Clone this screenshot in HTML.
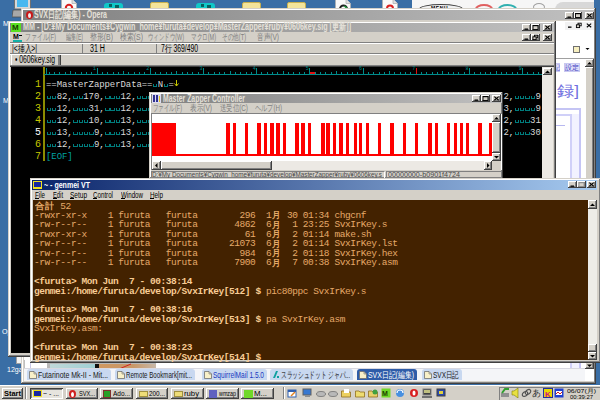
<!DOCTYPE html><html><head><meta charset="utf-8"><style>
html,body{margin:0;padding:0;}
body{width:600px;height:400px;overflow:hidden;position:relative;background:#3a6ea5;font-family:"Liberation Sans",sans-serif;}
div{position:absolute;box-sizing:border-box;}
.t{white-space:pre;font-size:10px;line-height:10px;}
</style></head><body>
<svg style="position:absolute;left:12px;top:0px" width="20" height="18" viewBox="0 0 20 18"><rect x="2.5" y="-1" width="16" height="10" rx="1" fill="#d8d8d8" stroke="#707070"/><rect x="5" y="0" width="11" height="7" fill="#48b8f0"/><path d="M1 10H12L13 17H0Z" fill="#a8a8a8" stroke="#505050" stroke-width="0.8"/></svg>
<svg style="position:absolute;left:61px;top:0px" width="16" height="9" viewBox="0 0 16 9"><path d="M0.5 -1H11L15.5 3.5V9H0.5Z" fill="#fafafa" stroke="#b0b0b0" stroke-width="0.8"/><path d="M11 -1V3.5H15.5" fill="#e0e0e0" stroke="#a0a0a0" stroke-width="0.6"/><circle cx="8" cy="8" r="3.2" fill="none" stroke="#d82020" stroke-width="2"/></svg>
<div style="left:104px;top:3px;width:19px;height:6px;background:#10c8c8;border-radius:3px 3px 0 0"></div>
<div style="left:109px;top:4px;width:3px;height:3px;background:#086060"></div>
<div style="left:115px;top:5px;width:4px;height:3px;background:#086060"></div>
<div style="left:150px;top:2px;width:19px;height:7px;background:#f4e49a;border:1px solid #c8b050;border-radius:2px 2px 0 0"></div>
<div style="left:196px;top:3px;width:19px;height:6px;background:#10c8c8;border-radius:3px 3px 0 0"></div>
<div style="left:201px;top:4px;width:3px;height:3px;background:#086060"></div>
<div style="left:207px;top:5px;width:4px;height:3px;background:#086060"></div>
<div style="left:242px;top:2px;width:19px;height:7px;background:#f4e49a;border:1px solid #c8b050;border-radius:2px 2px 0 0"></div>
<div style="left:287px;top:2px;width:19px;height:7px;background:#f4e49a;border:1px solid #c8b050;border-radius:2px 2px 0 0"></div>
<svg style="position:absolute;left:335px;top:0px" width="16" height="9" viewBox="0 0 16 9"><path d="M0.5 -1H11L15.5 3.5V9H0.5Z" fill="#fafafa" stroke="#b0b0b0" stroke-width="0.8"/><path d="M11 -1V3.5H15.5" fill="#e0e0e0" stroke="#a0a0a0" stroke-width="0.6"/><path d="M5 9A3.5 3.5 0 0 1 12 9" fill="none" stroke="#202020" stroke-width="2"/><path d="M9 6L12 8" stroke="#20a040" stroke-width="1.5"/></svg>
<svg style="position:absolute;left:382px;top:0px" width="16" height="9" viewBox="0 0 16 9"><path d="M0.5 -1H11L15.5 3.5V9H0.5Z" fill="#fafafa" stroke="#b0b0b0" stroke-width="0.8"/><path d="M11 -1V3.5H15.5" fill="#e0e0e0" stroke="#a0a0a0" stroke-width="0.6"/><circle cx="8" cy="8.5" r="3" fill="none" stroke="#d82020" stroke-width="2"/></svg>
<div style="left:412px;top:0px;width:182px;height:9px;background:#f6f6f6"></div>
<div style="left:419px;top:4px;width:44px;height:10px;background:#f0f0f0;border:1px solid #404040;border-radius:50%"></div>
<div class="t" style="left:431px;top:5.5px;font:bold 5px/5px 'Liberation Sans';color:#000;letter-spacing:0.6px">MENU</div>
<div style="left:475px;top:4px;width:18px;height:10px;border:2px solid #e06060;border-radius:50%"></div>
<div style="left:498px;top:4px;width:19px;height:10px;border:2px solid #30b0b0;border-radius:50%"></div>
<div style="left:533px;top:3px;width:12px;height:8px;border:1px solid #a0a0a0;border-radius:50%"></div>
<div style="left:555px;top:2px;width:39px;height:8px;background:#d8d8d8;border-radius:10px 0 0 0"></div>
<div class="t" style="left:3px;top:20px;color:#fff;font-size:7px;line-height:7px">M</div>
<div class="t" style="left:3px;top:97px;color:#fff;font-size:7px;line-height:7px">M</div>
<div class="t" style="left:2px;top:328px;color:#fff;font-size:7px;line-height:7px">Op</div>
<div class="t" style="left:7px;top:366px;color:#fff;font-size:7px;line-height:8px">12ga</div>
<div style="left:16px;top:356px;width:6px;height:8px;background:#f4f4f4;border:1px solid #a0a0a0"></div>
<div style="left:21px;top:8px;width:575px;height:376px;background:#d4d0c8;box-shadow: inset -1px -1px #404040, inset 1px 1px #d4d0c8, inset -2px -2px #808080, inset 2px 2px #ffffff;"></div>
<div style="left:23px;top:10px;width:571px;height:10px;background:linear-gradient(90deg,#808080,#c0c0c0)"></div>
<div style="left:26px;top:11px;width:7px;height:8px;background:#c81818;border-radius:50%"></div>
<div style="left:28px;top:12.5px;width:3px;height:5px;background:#f0e8e8;border-radius:50%"></div>
<div style="left:34px;top:8px;width:76px;height:20px;overflow:hidden"><div id="f1" class="t" style="left:0;top:2px;color:#e4e0d8;font-weight:bold;font-size:10px;line-height:10px;transform:scaleX(0.6988);transform-origin:0 0">SVX日記(編集) - Opera</div></div>
<div style="left:565px;top:12px;width:9px;height:7px;background:#d4d0c8;box-shadow: inset -1px -1px #404040, inset 1px 1px #ffffff, inset -2px -2px #808080;"></div>
<svg style="position:absolute;left:565px;top:12px" width="9" height="7" viewBox="0 0 9 7"><rect x="2.5" y="4.5" width="3.5" height="1.3" fill="#000"/></svg>
<div style="left:574px;top:12px;width:8px;height:7px;background:#d4d0c8;box-shadow: inset -1px -1px #404040, inset 1px 1px #ffffff, inset -2px -2px #808080;"></div>
<svg style="position:absolute;left:574px;top:12px" width="8" height="7" viewBox="0 0 8 7"><rect x="1.5" y="1.5" width="5" height="4" fill="none" stroke="#000" stroke-width="0.9"/><rect x="1.5" y="1" width="5" height="1.2" fill="#000"/></svg>
<div style="left:585px;top:12px;width:9px;height:7px;background:#d4d0c8;box-shadow: inset -1px -1px #404040, inset 1px 1px #ffffff, inset -2px -2px #808080;"></div>
<svg style="position:absolute;left:585px;top:12px" width="9" height="7" viewBox="0 0 9 7"><path d="M2.3 1.6L6.7 5.2M6.7 1.6L2.3 5.2" stroke="#000" stroke-width="1.1"/></svg>
<div style="left:24px;top:21px;width:570px;height:360px;background:#fff"></div>
<div style="left:565px;top:22px;width:29px;height:8px;background:#f2f2f2"></div>
<svg style="position:absolute;left:566px;top:22px" width="8" height="7" viewBox="0 0 8 7"><rect x="2.0" y="4.5" width="3.5" height="1.3" fill="#000"/></svg>
<svg style="position:absolute;left:575px;top:22px" width="8" height="7" viewBox="0 0 8 7"><rect x="3.0" y="1.2" width="3.2" height="2.6" fill="none" stroke="#000" stroke-width="0.9"/><rect x="1.4" y="2.8" width="3.2" height="2.8" fill="#d4d0c8" stroke="#000" stroke-width="0.9"/></svg>
<svg style="position:absolute;left:585px;top:22px" width="8" height="7" viewBox="0 0 8 7"><path d="M1.7999999999999998 1.6L6.2 5.2M6.2 1.6L1.7999999999999998 5.2" stroke="#000" stroke-width="1.1"/></svg>
<div style="left:573px;top:46px;width:7px;height:7px;background:#f8f0c0;border:1px solid #707070"></div>
<svg style="position:absolute;left:585px;top:47px" width="5" height="4" viewBox="0 0 5 4"><path d="M0.5 1L4.5 1L2.5 3Z" fill="#000"/></svg>
<div style="left:24px;top:58px;width:570px;height:1px;background:#a0a0a0"></div>
<div style="left:552px;top:63px;width:8px;height:9px;background:#e0e0f8;border:1px solid #c8c8f0"></div>
<div style="left:554px;top:61px;width:9px;height:20px;overflow:hidden"><div id="f2" class="t" style="left:0;top:2px;color:#4848d0;font-size:7px;line-height:9px;transform:scaleX(0.8571);transform-origin:0 0">記</div></div>
<div style="left:564px;top:63px;width:16px;height:9px;background:#e0e0f8;border:1px solid #c8c8f0"></div>
<div style="left:565px;top:61px;width:17px;height:20px;overflow:hidden"><div id="f3" class="t" style="left:0;top:2px;color:#3838c0;font-size:7px;line-height:9px;transform:scaleX(1.0000);transform-origin:0 0">設定</div></div>
<div style="left:557px;top:81px;width:25px;height:20px;overflow:hidden"><div id="f4" class="t" style="left:0;top:2px;color:#7070e0;font-size:15px;line-height:15px;transform:scaleX(1.1475);transform-origin:0 0">録]</div></div>
<div style="left:556px;top:108px;width:25px;height:260px;border-top:2px solid #c4c4f4;border-right:2px solid #c4c4f4"></div>
<div style="left:556px;top:114px;width:16px;height:254px;border-top:2px solid #d0d0f8;border-right:2px solid #d0d0f8"></div>
<div style="left:572px;top:114px;width:7px;height:254px;background:#f2f2ff"></div>
<div style="left:556px;top:125px;width:9px;height:1px;background:#b8b8f0"></div>
<div style="left:585px;top:59px;width:9px;height:309px;background:#d8d8dc"></div>
<div style="left:585px;top:59px;width:9px;height:8px;background:#d4d0c8;box-shadow: inset -1px -1px #404040, inset 1px 1px #ffffff, inset -2px -2px #808080;"></div>
<svg style="position:absolute;left:585px;top:59px" width="9" height="8" viewBox="0 0 9 8"><path d="M2.0 5.5L7.0 5.5L4.5 3.0Z" fill="#000"/></svg>
<div style="left:585px;top:67px;width:9px;height:288px;background:#d4d0c8;box-shadow: inset -1px -1px #404040, inset 1px 1px #ffffff, inset -2px -2px #808080;"></div>
<div style="left:585px;top:362px;width:9px;height:7px;background:#d4d0c8;box-shadow: inset -1px -1px #404040, inset 1px 1px #ffffff, inset -2px -2px #808080;"></div>
<svg style="position:absolute;left:585px;top:362px" width="9" height="7" viewBox="0 0 9 7"><path d="M2.0 2.5L7.0 2.5L4.5 5.0Z" fill="#000"/></svg>
<div style="left:24px;top:360px;width:1px;height:9px;background:#c0c0c0"></div>
<div style="left:47px;top:363px;width:109px;height:6px;background:#b8b8b8"></div>
<div style="left:50px;top:363.5px;width:45px;height:5px;background:linear-gradient(90deg,#c0d8d8,#a0d0d4)"></div>
<div style="left:95px;top:363.5px;width:4px;height:5px;background:#101010"></div>
<div style="left:99px;top:363.5px;width:57px;height:5px;background:linear-gradient(90deg,#d09860,#c89868 60%,#c8b8a8)"></div>
<svg style="position:absolute;left:118px;top:363px" width="14" height="6" viewBox="0 0 14 6"><path d="M1 6L13 1" stroke="#d02020" stroke-width="1"/></svg>
<div style="left:30px;top:356px;width:1px;height:13px;background:#c8c8e8"></div>
<div style="left:24px;top:368px;width:561px;height:13px;background:#f4f5f8;border-top:1px solid #d8d8e0"></div>
<div style="left:27px;top:369px;width:84px;height:11px;background:#c8d8f0;border-radius:3px 3px 0 0"></div>
<svg style="position:absolute;left:29px;top:370px" width="8" height="9" viewBox="0 0 8 9"><path d="M0.5 1.5H5L7.5 4V8.5H0.5Z" fill="#f8f0c8" stroke="#707070" stroke-width="0.8"/><path d="M5 1.5V4H7.5" fill="none" stroke="#707070" stroke-width="0.6"/></svg>
<div style="left:38px;top:368px;width:73px;height:20px;overflow:hidden"><div id="f5" class="t" style="left:0;top:2px;color:#202020;font-size:9px;line-height:10px;transform:scaleX(0.7733);transform-origin:0 0">Futarinote Mk-II - Mit...</div></div>
<div style="left:115px;top:369px;width:80px;height:11px;background:#c8d8f0;border-radius:3px 3px 0 0"></div>
<svg style="position:absolute;left:117px;top:370px" width="8" height="9" viewBox="0 0 8 9"><path d="M0.5 1.5H5L7.5 4V8.5H0.5Z" fill="#f8f0c8" stroke="#707070" stroke-width="0.8"/><path d="M5 1.5V4H7.5" fill="none" stroke="#707070" stroke-width="0.6"/></svg>
<div style="left:126px;top:368px;width:69px;height:20px;overflow:hidden"><div id="f6" class="t" style="left:0;top:2px;color:#202020;font-size:9px;line-height:10px;transform:scaleX(0.6837);transform-origin:0 0">Remote Bookmark[mit...</div></div>
<div style="left:202px;top:369px;width:65px;height:11px;background:#c8d8f0;border-radius:3px 3px 0 0"></div>
<svg style="position:absolute;left:204px;top:370px" width="8" height="9" viewBox="0 0 8 9"><path d="M0.5 1.5H5L7.5 4V8.5H0.5Z" fill="#f8f0c8" stroke="#707070" stroke-width="0.8"/><path d="M5 1.5V4H7.5" fill="none" stroke="#707070" stroke-width="0.6"/></svg>
<div style="left:213px;top:368px;width:54px;height:20px;overflow:hidden"><div id="f7" class="t" style="left:0;top:2px;color:#1838c0;font-size:9px;line-height:10px;transform:scaleX(0.7282);transform-origin:0 0">SquirrelMail 1.5.0</div></div>
<div style="left:270px;top:369px;width:83px;height:11px;background:#c8d8f0;border-radius:3px 3px 0 0"></div>
<svg style="position:absolute;left:272px;top:370px" width="8" height="9" viewBox="0 0 8 9"><path d="M1 8L4 1L6 1L3 8Z" fill="#10a0a0"/><rect x="5" y="6" width="2" height="2" fill="#10a0a0"/></svg>
<div style="left:281px;top:368px;width:72px;height:20px;overflow:hidden"><div id="f8" class="t" style="left:0;top:2px;color:#202020;font-size:9px;line-height:10px;transform:scaleX(0.6329);transform-origin:0 0">スラッシュドット ジャパ...</div></div>
<div style="left:357px;top:369px;width:60px;height:11px;background:#2e5ca8;border-radius:3px 3px 0 0"></div>
<svg style="position:absolute;left:359px;top:370px" width="8" height="9" viewBox="0 0 8 9"><path d="M0.5 1.5H5L7.5 4V8.5H0.5Z" fill="#f8f0c8" stroke="#707070" stroke-width="0.8"/><path d="M5 1.5V4H7.5" fill="none" stroke="#707070" stroke-width="0.6"/></svg>
<div style="left:368px;top:368px;width:49px;height:20px;overflow:hidden"><div id="f9" class="t" style="left:0;top:2px;color:#fff;font-size:9px;line-height:10px;transform:scaleX(0.7665);transform-origin:0 0">SVX日記(編集)</div></div>
<div style="left:422px;top:369px;width:40px;height:11px;background:#c8d8f0;border-radius:3px 3px 0 0"></div>
<svg style="position:absolute;left:424px;top:370px" width="8" height="9" viewBox="0 0 8 9"><path d="M0.5 1.5H5L7.5 4V8.5H0.5Z" fill="#f8f0c8" stroke="#707070" stroke-width="0.8"/><path d="M5 1.5V4H7.5" fill="none" stroke="#707070" stroke-width="0.6"/></svg>
<div style="left:433px;top:368px;width:29px;height:20px;overflow:hidden"><div id="f10" class="t" style="left:0;top:2px;color:#202020;font-size:9px;line-height:10px;transform:scaleX(0.7219);transform-origin:0 0">SVX日記</div></div>
<div style="left:8px;top:21px;width:548px;height:336px;background:#d4d0c8;box-shadow: inset -1px -1px #404040, inset 1px 1px #d4d0c8, inset -2px -2px #808080, inset 2px 2px #ffffff;"></div>
<div style="left:10px;top:23px;width:544px;height:9px;background:linear-gradient(90deg,#808080,#c0c0c0)"></div>
<div style="left:11px;top:23px;width:10px;height:9px;background:#58e020"></div>
<div class="t" style="left:12px;top:23px;color:#183800;font:bold 8px/9px 'Liberation Sans'">M</div>
<div style="left:23px;top:20px;width:331px;height:20px;overflow:hidden"><div id="f11" class="t" style="left:0;top:2px;color:#e4e0d8;font-weight:bold;font-size:10px;line-height:10px;transform:scaleX(0.7149);transform-origin:0 0">MM - [D:¥My Documents¥Cygwin_home¥furuta¥develop¥MasterZapper¥ruby¥0606key.sig [更新]]</div></div>
<div style="left:522px;top:24px;width:9px;height:7px;background:#d4d0c8;box-shadow: inset -1px -1px #404040, inset 1px 1px #ffffff, inset -2px -2px #808080;"></div>
<svg style="position:absolute;left:522px;top:24px" width="9" height="7" viewBox="0 0 9 7"><rect x="2.5" y="4.5" width="3.5" height="1.3" fill="#000"/></svg>
<div style="left:531px;top:24px;width:9px;height:7px;background:#d4d0c8;box-shadow: inset -1px -1px #404040, inset 1px 1px #ffffff, inset -2px -2px #808080;"></div>
<svg style="position:absolute;left:531px;top:24px" width="9" height="7" viewBox="0 0 9 7"><rect x="2.0" y="1.5" width="5" height="4" fill="none" stroke="#000" stroke-width="0.9"/><rect x="2.0" y="1" width="5" height="1.2" fill="#000"/></svg>
<div style="left:543px;top:24px;width:9px;height:7px;background:#d4d0c8;box-shadow: inset -1px -1px #404040, inset 1px 1px #ffffff, inset -2px -2px #808080;"></div>
<svg style="position:absolute;left:543px;top:24px" width="9" height="7" viewBox="0 0 9 7"><path d="M2.3 1.6L6.7 5.2M6.7 1.6L2.3 5.2" stroke="#000" stroke-width="1.1"/></svg>
<div class="t" style="left:13px;top:33px;color:#000;font:bold 7px/7px 'Liberation Sans'">M</div>
<div style="left:19px;top:35px;width:3px;height:1px;background:#000"></div>
<div style="left:13px;top:39.5px;width:9px;height:2px;background:#10b0a8"></div>
<div style="left:25px;top:31px;width:34px;height:20px;overflow:hidden"><div id="f12" class="t" style="left:0;top:2px;color:#808080;font-size:9px;line-height:9px;transform:scaleX(0.6526);transform-origin:0 0">ファイル(F)</div></div>
<div style="left:66px;top:31px;width:20px;height:20px;overflow:hidden"><div id="f13" class="t" style="left:0;top:2px;color:#808080;font-size:9px;line-height:9px;transform:scaleX(0.5667);transform-origin:0 0">編集(E)</div></div>
<div style="left:90px;top:31px;width:26px;height:20px;overflow:hidden"><div id="f14" class="t" style="left:0;top:2px;color:#808080;font-size:9px;line-height:9px;transform:scaleX(0.7667);transform-origin:0 0">整形(B)</div></div>
<div style="left:120px;top:31px;width:26px;height:20px;overflow:hidden"><div id="f15" class="t" style="left:0;top:2px;color:#808080;font-size:9px;line-height:9px;transform:scaleX(0.7667);transform-origin:0 0">検索(S)</div></div>
<div style="left:148px;top:31px;width:39px;height:20px;overflow:hidden"><div id="f16" class="t" style="left:0;top:2px;color:#808080;font-size:9px;line-height:9px;transform:scaleX(0.6050);transform-origin:0 0">ウィンドウ(W)</div></div>
<div style="left:191px;top:31px;width:28px;height:20px;overflow:hidden"><div id="f17" class="t" style="left:0;top:2px;color:#808080;font-size:9px;line-height:9px;transform:scaleX(0.6173);transform-origin:0 0">マクロ(M)</div></div>
<div style="left:222px;top:31px;width:27px;height:20px;overflow:hidden"><div id="f18" class="t" style="left:0;top:2px;color:#808080;font-size:9px;line-height:9px;transform:scaleX(0.6234);transform-origin:0 0">その他(T)</div></div>
<div style="left:257px;top:31px;width:25px;height:20px;overflow:hidden"><div id="f19" class="t" style="left:0;top:2px;color:#808080;font-size:9px;line-height:9px;transform:scaleX(0.7333);transform-origin:0 0">音声(V)</div></div>
<div style="left:522px;top:34px;width:9px;height:7px;background:#d4d0c8;box-shadow: inset -1px -1px #404040, inset 1px 1px #ffffff, inset -2px -2px #808080;"></div>
<svg style="position:absolute;left:522px;top:34px" width="9" height="7" viewBox="0 0 9 7"><rect x="2.5" y="4.5" width="3.5" height="1.3" fill="#000"/></svg>
<div style="left:531px;top:34px;width:9px;height:7px;background:#d4d0c8;box-shadow: inset -1px -1px #404040, inset 1px 1px #ffffff, inset -2px -2px #808080;"></div>
<svg style="position:absolute;left:531px;top:34px" width="9" height="7" viewBox="0 0 9 7"><rect x="3.5" y="1.2" width="3.2" height="2.6" fill="none" stroke="#000" stroke-width="0.9"/><rect x="1.9" y="2.8" width="3.2" height="2.8" fill="#d4d0c8" stroke="#000" stroke-width="0.9"/></svg>
<div style="left:543px;top:34px;width:9px;height:7px;background:#d4d0c8;box-shadow: inset -1px -1px #404040, inset 1px 1px #ffffff, inset -2px -2px #808080;"></div>
<svg style="position:absolute;left:543px;top:34px" width="9" height="7" viewBox="0 0 9 7"><path d="M2.3 1.6L6.7 5.2M6.7 1.6L2.3 5.2" stroke="#000" stroke-width="1.1"/></svg>
<div style="left:10px;top:42px;width:544px;height:2px;border-top:1px solid #808080;border-bottom:1px solid #fff"></div>
<div style="left:12px;top:42px;width:28px;height:20px;overflow:hidden"><div id="f20" class="t" style="left:0;top:2px;color:#000;font-size:10px;line-height:10px;transform:scaleX(0.6780);transform-origin:0 0">|&lt;挿入&gt;|</div></div>
<div style="left:82px;top:44px;width:1px;height:9px;background:#808080"></div>
<div style="left:90px;top:42px;width:18px;height:20px;overflow:hidden"><div id="f21" class="t" style="left:0;top:2px;color:#000;font-size:10px;line-height:10px;transform:scaleX(0.7101);transform-origin:0 0">31 H</div></div>
<div style="left:156px;top:44px;width:1px;height:9px;background:#808080"></div>
<div style="left:161px;top:42px;width:40px;height:20px;overflow:hidden"><div id="f22" class="t" style="left:0;top:2px;color:#000;font-size:10px;line-height:10px;transform:scaleX(0.6789);transform-origin:0 0">7行 369/490</div></div>
<div style="left:10px;top:53px;width:544px;height:2px;border-top:1px solid #808080;border-bottom:1px solid #fff"></div>
<div style="left:11px;top:55px;width:50px;height:11px;background:#d4d0c8;border-left:1px solid #fff;border-right:1px solid #404040;box-shadow:inset -2px 0 #808080"></div>
<div style="left:15px;top:53px;width:43px;height:20px;overflow:hidden"><div id="f23" class="t" style="left:0;top:2px;color:#000;font-size:10px;line-height:10px;transform:scaleX(0.6790);transform-origin:0 0">• 0606key.sig</div></div>
<div style="left:10px;top:65px;width:544px;height:2px;border-top:1px solid #808080;border-bottom:1px solid #404040"></div>
<div style="left:11px;top:67px;width:531px;height:286px;background:#000"></div>
<div style="left:542px;top:67px;width:11px;height:286px;background:#ece9e4"></div>
<div style="left:543px;top:68px;width:9px;height:7px;background:#d4d0c8;box-shadow: inset -1px -1px #404040, inset 1px 1px #ffffff, inset -2px -2px #808080;"></div>
<svg style="position:absolute;left:543px;top:68px" width="9" height="7" viewBox="0 0 9 7"><path d="M2.0 5.0L7.0 5.0L4.5 2.5Z" fill="#000"/></svg>
<div style="left:43px;top:67px;width:1.5px;height:94px;background:#8c8c00"></div>
<div style="left:44px;top:74px;width:498px;height:1px;background:#008b8b"></div><div style="left:48.66px;top:72px;width:1px;height:2px;background:#008b8b"></div><div style="left:53.98px;top:72px;width:1px;height:2px;background:#008b8b"></div><div style="left:59.30px;top:72px;width:1px;height:2px;background:#008b8b"></div><div style="left:64.62px;top:72px;width:1px;height:2px;background:#008b8b"></div><div style="left:69.94px;top:71px;width:1px;height:3px;background:#008b8b"></div><div style="left:75.26px;top:72px;width:1px;height:2px;background:#008b8b"></div><div style="left:80.58px;top:72px;width:1px;height:2px;background:#008b8b"></div><div style="left:85.90px;top:72px;width:1px;height:2px;background:#008b8b"></div><div style="left:91.22px;top:72px;width:1px;height:2px;background:#008b8b"></div><div style="left:96.54px;top:68px;width:1px;height:6px;background:#008b8b"></div><div class="t" style="left:93.04px;top:67px;color:#008b8b;font:5px/5px 'Liberation Mono'">1</div><div style="left:101.86px;top:72px;width:1px;height:2px;background:#008b8b"></div><div style="left:107.18px;top:72px;width:1px;height:2px;background:#008b8b"></div><div style="left:112.50px;top:72px;width:1px;height:2px;background:#008b8b"></div><div style="left:117.82px;top:72px;width:1px;height:2px;background:#008b8b"></div><div style="left:123.14px;top:71px;width:1px;height:3px;background:#008b8b"></div><div style="left:128.46px;top:72px;width:1px;height:2px;background:#008b8b"></div><div style="left:133.78px;top:72px;width:1px;height:2px;background:#008b8b"></div><div style="left:139.10px;top:72px;width:1px;height:2px;background:#008b8b"></div><div style="left:144.42px;top:72px;width:1px;height:2px;background:#008b8b"></div><div style="left:149.74px;top:68px;width:1px;height:6px;background:#008b8b"></div><div class="t" style="left:146.24px;top:67px;color:#008b8b;font:5px/5px 'Liberation Mono'">2</div><div style="left:155.06px;top:72px;width:1px;height:2px;background:#008b8b"></div><div style="left:160.38px;top:72px;width:1px;height:2px;background:#008b8b"></div><div style="left:165.70px;top:72px;width:1px;height:2px;background:#008b8b"></div><div style="left:171.02px;top:72px;width:1px;height:2px;background:#008b8b"></div><div style="left:176.34px;top:71px;width:1px;height:3px;background:#008b8b"></div><div style="left:181.66px;top:72px;width:1px;height:2px;background:#008b8b"></div><div style="left:186.98px;top:72px;width:1px;height:2px;background:#008b8b"></div><div style="left:192.30px;top:72px;width:1px;height:2px;background:#008b8b"></div><div style="left:197.62px;top:72px;width:1px;height:2px;background:#008b8b"></div><div style="left:202.94px;top:68px;width:1px;height:6px;background:#008b8b"></div><div class="t" style="left:199.44px;top:67px;color:#008b8b;font:5px/5px 'Liberation Mono'">3</div><div style="left:208.26px;top:72px;width:1px;height:2px;background:#008b8b"></div><div style="left:213.58px;top:72px;width:1px;height:2px;background:#008b8b"></div><div style="left:218.90px;top:72px;width:1px;height:2px;background:#008b8b"></div><div style="left:224.22px;top:72px;width:1px;height:2px;background:#008b8b"></div><div style="left:229.54px;top:71px;width:1px;height:3px;background:#008b8b"></div><div style="left:234.86px;top:72px;width:1px;height:2px;background:#008b8b"></div><div style="left:240.18px;top:72px;width:1px;height:2px;background:#008b8b"></div><div style="left:245.50px;top:72px;width:1px;height:2px;background:#008b8b"></div><div style="left:250.82px;top:72px;width:1px;height:2px;background:#008b8b"></div><div style="left:256.14px;top:68px;width:1px;height:6px;background:#008b8b"></div><div class="t" style="left:252.64px;top:67px;color:#008b8b;font:5px/5px 'Liberation Mono'">4</div><div style="left:261.46px;top:72px;width:1px;height:2px;background:#008b8b"></div><div style="left:266.78px;top:72px;width:1px;height:2px;background:#008b8b"></div><div style="left:272.10px;top:72px;width:1px;height:2px;background:#008b8b"></div><div style="left:277.42px;top:72px;width:1px;height:2px;background:#008b8b"></div><div style="left:282.74px;top:71px;width:1px;height:3px;background:#008b8b"></div><div style="left:288.06px;top:72px;width:1px;height:2px;background:#008b8b"></div><div style="left:293.38px;top:72px;width:1px;height:2px;background:#008b8b"></div><div style="left:298.70px;top:72px;width:1px;height:2px;background:#008b8b"></div><div style="left:304.02px;top:72px;width:1px;height:2px;background:#008b8b"></div><div style="left:309.34px;top:68px;width:1px;height:6px;background:#008b8b"></div><div class="t" style="left:305.84px;top:67px;color:#008b8b;font:5px/5px 'Liberation Mono'">5</div><div style="left:314.66px;top:72px;width:1px;height:2px;background:#008b8b"></div><div style="left:319.98px;top:72px;width:1px;height:2px;background:#008b8b"></div><div style="left:325.30px;top:72px;width:1px;height:2px;background:#008b8b"></div><div style="left:330.62px;top:72px;width:1px;height:2px;background:#008b8b"></div><div style="left:335.94px;top:71px;width:1px;height:3px;background:#008b8b"></div><div style="left:341.26px;top:72px;width:1px;height:2px;background:#008b8b"></div><div style="left:346.58px;top:72px;width:1px;height:2px;background:#008b8b"></div><div style="left:351.90px;top:72px;width:1px;height:2px;background:#008b8b"></div><div style="left:357.22px;top:72px;width:1px;height:2px;background:#008b8b"></div><div style="left:362.54px;top:68px;width:1px;height:6px;background:#008b8b"></div><div class="t" style="left:359.04px;top:67px;color:#008b8b;font:5px/5px 'Liberation Mono'">6</div><div style="left:367.86px;top:72px;width:1px;height:2px;background:#008b8b"></div><div style="left:373.18px;top:72px;width:1px;height:2px;background:#008b8b"></div><div style="left:378.50px;top:72px;width:1px;height:2px;background:#008b8b"></div><div style="left:383.82px;top:72px;width:1px;height:2px;background:#008b8b"></div><div style="left:389.14px;top:71px;width:1px;height:3px;background:#008b8b"></div><div style="left:394.46px;top:72px;width:1px;height:2px;background:#008b8b"></div><div style="left:399.78px;top:72px;width:1px;height:2px;background:#008b8b"></div><div style="left:405.10px;top:72px;width:1px;height:2px;background:#008b8b"></div><div style="left:410.42px;top:72px;width:1px;height:2px;background:#008b8b"></div><div style="left:415.74px;top:68px;width:1px;height:6px;background:#e01010"></div><div class="t" style="left:412.24px;top:67px;color:#008b8b;font:5px/5px 'Liberation Mono'">7</div><div style="left:421.06px;top:72px;width:1px;height:2px;background:#008b8b"></div><div style="left:426.38px;top:72px;width:1px;height:2px;background:#008b8b"></div><div style="left:431.70px;top:72px;width:1px;height:2px;background:#008b8b"></div><div style="left:437.02px;top:72px;width:1px;height:2px;background:#008b8b"></div><div style="left:442.34px;top:71px;width:1px;height:3px;background:#008b8b"></div><div style="left:447.66px;top:72px;width:1px;height:2px;background:#008b8b"></div><div style="left:452.98px;top:72px;width:1px;height:2px;background:#008b8b"></div><div style="left:458.30px;top:72px;width:1px;height:2px;background:#008b8b"></div><div style="left:463.62px;top:72px;width:1px;height:2px;background:#008b8b"></div><div style="left:468.94px;top:68px;width:1px;height:6px;background:#008b8b"></div><div class="t" style="left:465.44px;top:67px;color:#008b8b;font:5px/5px 'Liberation Mono'">8</div><div style="left:474.26px;top:72px;width:1px;height:2px;background:#008b8b"></div><div style="left:479.58px;top:72px;width:1px;height:2px;background:#008b8b"></div><div style="left:484.90px;top:72px;width:1px;height:2px;background:#008b8b"></div><div style="left:490.22px;top:72px;width:1px;height:2px;background:#008b8b"></div><div style="left:495.54px;top:71px;width:1px;height:3px;background:#008b8b"></div><div style="left:500.86px;top:72px;width:1px;height:2px;background:#008b8b"></div><div style="left:506.18px;top:72px;width:1px;height:2px;background:#008b8b"></div><div style="left:511.50px;top:72px;width:1px;height:2px;background:#008b8b"></div><div style="left:516.82px;top:72px;width:1px;height:2px;background:#008b8b"></div><div style="left:522.14px;top:68px;width:1px;height:6px;background:#008b8b"></div><div class="t" style="left:518.64px;top:67px;color:#008b8b;font:5px/5px 'Liberation Mono'">9</div><div style="left:527.46px;top:72px;width:1px;height:2px;background:#008b8b"></div><div style="left:532.78px;top:72px;width:1px;height:2px;background:#008b8b"></div><div style="left:538.10px;top:72px;width:1px;height:2px;background:#008b8b"></div><div style="left:45.5px;top:68px;width:1px;height:6px;background:#008b8b"></div>
<div style="left:310px;top:71.5px;width:5px;height:2.5px;background:#e01010"></div>
<div class="t" style="left:31px;top:78.5px;color:#c8c800;font:10px/12px 'Liberation Mono',monospace;width:10px;text-align:right">1</div>
<div style="left:153.00px;top:83.5px;width:4.4px;height:3px;border:1px solid #007c7c;border-top:none"></div><div style="left:163.64px;top:83.5px;width:4.4px;height:3px;border:1px solid #007c7c;border-top:none"></div><div class="t" style="left:46.00px;top:78.5px;color:#d8d8d8;font:9px/12px 'Liberation Mono',monospace;letter-spacing:-0.08px">==MasterZapperData== N =</div>
<svg style="position:absolute;left:174px;top:80px" width="5" height="7" viewBox="0 0 5 7"><path d="M2.5 0V6M0.5 3.5L2.5 6L4.5 3.5" stroke="#c8c800" stroke-width="1" fill="none"/></svg>
<div class="t" style="left:31px;top:90.5px;color:#c8c800;font:10px/12px 'Liberation Mono',monospace;width:10px;text-align:right">2</div>
<div style="left:46.60px;top:95.5px;width:4.4px;height:3px;border:1px solid #007c7c;border-top:none"></div><div style="left:51.92px;top:95.5px;width:4.4px;height:3px;border:1px solid #007c7c;border-top:none"></div><div style="left:73.20px;top:95.5px;width:4.4px;height:3px;border:1px solid #007c7c;border-top:none"></div><div style="left:78.52px;top:95.5px;width:4.4px;height:3px;border:1px solid #007c7c;border-top:none"></div><div style="left:105.12px;top:95.5px;width:4.4px;height:3px;border:1px solid #007c7c;border-top:none"></div><div style="left:110.44px;top:95.5px;width:4.4px;height:3px;border:1px solid #007c7c;border-top:none"></div><div style="left:115.76px;top:95.5px;width:4.4px;height:3px;border:1px solid #007c7c;border-top:none"></div><div style="left:137.04px;top:95.5px;width:4.4px;height:3px;border:1px solid #007c7c;border-top:none"></div><div style="left:142.36px;top:95.5px;width:4.4px;height:3px;border:1px solid #007c7c;border-top:none"></div><div style="left:147.68px;top:95.5px;width:4.4px;height:3px;border:1px solid #007c7c;border-top:none"></div><div class="t" style="left:46.00px;top:90.5px;color:#d8d8d8;font:9px/12px 'Liberation Mono',monospace;letter-spacing:-0.08px">  82,  170,   12,   </div><div style="left:514.76px;top:95.5px;width:4.4px;height:3px;border:1px solid #007c7c;border-top:none"></div><div style="left:520.08px;top:95.5px;width:4.4px;height:3px;border:1px solid #007c7c;border-top:none"></div><div style="left:525.40px;top:95.5px;width:4.4px;height:3px;border:1px solid #007c7c;border-top:none"></div><div style="left:530.72px;top:95.5px;width:4.4px;height:3px;border:1px solid #007c7c;border-top:none"></div><div class="t" style="left:503.52px;top:90.5px;color:#d8d8d8;font:9px/12px 'Liberation Mono',monospace;letter-spacing:-0.08px">2,    9</div>
<div class="t" style="left:31px;top:102.5px;color:#c8c800;font:10px/12px 'Liberation Mono',monospace;width:10px;text-align:right">3</div>
<div style="left:46.60px;top:107.5px;width:4.4px;height:3px;border:1px solid #007c7c;border-top:none"></div><div style="left:51.92px;top:107.5px;width:4.4px;height:3px;border:1px solid #007c7c;border-top:none"></div><div style="left:73.20px;top:107.5px;width:4.4px;height:3px;border:1px solid #007c7c;border-top:none"></div><div style="left:78.52px;top:107.5px;width:4.4px;height:3px;border:1px solid #007c7c;border-top:none"></div><div style="left:83.84px;top:107.5px;width:4.4px;height:3px;border:1px solid #007c7c;border-top:none"></div><div style="left:105.12px;top:107.5px;width:4.4px;height:3px;border:1px solid #007c7c;border-top:none"></div><div style="left:110.44px;top:107.5px;width:4.4px;height:3px;border:1px solid #007c7c;border-top:none"></div><div style="left:115.76px;top:107.5px;width:4.4px;height:3px;border:1px solid #007c7c;border-top:none"></div><div style="left:137.04px;top:107.5px;width:4.4px;height:3px;border:1px solid #007c7c;border-top:none"></div><div style="left:142.36px;top:107.5px;width:4.4px;height:3px;border:1px solid #007c7c;border-top:none"></div><div style="left:147.68px;top:107.5px;width:4.4px;height:3px;border:1px solid #007c7c;border-top:none"></div><div class="t" style="left:46.00px;top:102.5px;color:#d8d8d8;font:9px/12px 'Liberation Mono',monospace;letter-spacing:-0.08px">  12,   31,   12,   </div><div style="left:514.76px;top:107.5px;width:4.4px;height:3px;border:1px solid #007c7c;border-top:none"></div><div style="left:520.08px;top:107.5px;width:4.4px;height:3px;border:1px solid #007c7c;border-top:none"></div><div style="left:525.40px;top:107.5px;width:4.4px;height:3px;border:1px solid #007c7c;border-top:none"></div><div style="left:530.72px;top:107.5px;width:4.4px;height:3px;border:1px solid #007c7c;border-top:none"></div><div class="t" style="left:503.52px;top:102.5px;color:#d8d8d8;font:9px/12px 'Liberation Mono',monospace;letter-spacing:-0.08px">3,    9</div>
<div class="t" style="left:31px;top:114.5px;color:#c8c800;font:10px/12px 'Liberation Mono',monospace;width:10px;text-align:right">4</div>
<div style="left:46.60px;top:119.5px;width:4.4px;height:3px;border:1px solid #007c7c;border-top:none"></div><div style="left:51.92px;top:119.5px;width:4.4px;height:3px;border:1px solid #007c7c;border-top:none"></div><div style="left:73.20px;top:119.5px;width:4.4px;height:3px;border:1px solid #007c7c;border-top:none"></div><div style="left:78.52px;top:119.5px;width:4.4px;height:3px;border:1px solid #007c7c;border-top:none"></div><div style="left:83.84px;top:119.5px;width:4.4px;height:3px;border:1px solid #007c7c;border-top:none"></div><div style="left:105.12px;top:119.5px;width:4.4px;height:3px;border:1px solid #007c7c;border-top:none"></div><div style="left:110.44px;top:119.5px;width:4.4px;height:3px;border:1px solid #007c7c;border-top:none"></div><div style="left:115.76px;top:119.5px;width:4.4px;height:3px;border:1px solid #007c7c;border-top:none"></div><div style="left:137.04px;top:119.5px;width:4.4px;height:3px;border:1px solid #007c7c;border-top:none"></div><div style="left:142.36px;top:119.5px;width:4.4px;height:3px;border:1px solid #007c7c;border-top:none"></div><div style="left:147.68px;top:119.5px;width:4.4px;height:3px;border:1px solid #007c7c;border-top:none"></div><div class="t" style="left:46.00px;top:114.5px;color:#d8d8d8;font:9px/12px 'Liberation Mono',monospace;letter-spacing:-0.08px">  12,   10,   13,   </div><div style="left:514.76px;top:119.5px;width:4.4px;height:3px;border:1px solid #007c7c;border-top:none"></div><div style="left:520.08px;top:119.5px;width:4.4px;height:3px;border:1px solid #007c7c;border-top:none"></div><div style="left:525.40px;top:119.5px;width:4.4px;height:3px;border:1px solid #007c7c;border-top:none"></div><div class="t" style="left:503.52px;top:114.5px;color:#d8d8d8;font:9px/12px 'Liberation Mono',monospace;letter-spacing:-0.08px">2,   31</div>
<div class="t" style="left:31px;top:126.5px;color:#ffffff;font:10px/12px 'Liberation Mono',monospace;width:10px;text-align:right">5</div>
<div style="left:46.60px;top:131.5px;width:4.4px;height:3px;border:1px solid #007c7c;border-top:none"></div><div style="left:51.92px;top:131.5px;width:4.4px;height:3px;border:1px solid #007c7c;border-top:none"></div><div style="left:73.20px;top:131.5px;width:4.4px;height:3px;border:1px solid #007c7c;border-top:none"></div><div style="left:78.52px;top:131.5px;width:4.4px;height:3px;border:1px solid #007c7c;border-top:none"></div><div style="left:83.84px;top:131.5px;width:4.4px;height:3px;border:1px solid #007c7c;border-top:none"></div><div style="left:89.16px;top:131.5px;width:4.4px;height:3px;border:1px solid #007c7c;border-top:none"></div><div style="left:105.12px;top:131.5px;width:4.4px;height:3px;border:1px solid #007c7c;border-top:none"></div><div style="left:110.44px;top:131.5px;width:4.4px;height:3px;border:1px solid #007c7c;border-top:none"></div><div style="left:115.76px;top:131.5px;width:4.4px;height:3px;border:1px solid #007c7c;border-top:none"></div><div style="left:137.04px;top:131.5px;width:4.4px;height:3px;border:1px solid #007c7c;border-top:none"></div><div style="left:142.36px;top:131.5px;width:4.4px;height:3px;border:1px solid #007c7c;border-top:none"></div><div style="left:147.68px;top:131.5px;width:4.4px;height:3px;border:1px solid #007c7c;border-top:none"></div><div class="t" style="left:46.00px;top:126.5px;color:#d8d8d8;font:9px/12px 'Liberation Mono',monospace;letter-spacing:-0.08px">  13,    9,   13,   </div><div style="left:514.76px;top:131.5px;width:4.4px;height:3px;border:1px solid #007c7c;border-top:none"></div><div style="left:520.08px;top:131.5px;width:4.4px;height:3px;border:1px solid #007c7c;border-top:none"></div><div style="left:525.40px;top:131.5px;width:4.4px;height:3px;border:1px solid #007c7c;border-top:none"></div><div class="t" style="left:503.52px;top:126.5px;color:#d8d8d8;font:9px/12px 'Liberation Mono',monospace;letter-spacing:-0.08px">2,   30</div>
<div class="t" style="left:31px;top:138.5px;color:#c8c800;font:10px/12px 'Liberation Mono',monospace;width:10px;text-align:right">6</div>
<div style="left:46.60px;top:143.5px;width:4.4px;height:3px;border:1px solid #007c7c;border-top:none"></div><div style="left:51.92px;top:143.5px;width:4.4px;height:3px;border:1px solid #007c7c;border-top:none"></div><div style="left:73.20px;top:143.5px;width:4.4px;height:3px;border:1px solid #007c7c;border-top:none"></div><div style="left:78.52px;top:143.5px;width:4.4px;height:3px;border:1px solid #007c7c;border-top:none"></div><div style="left:83.84px;top:143.5px;width:4.4px;height:3px;border:1px solid #007c7c;border-top:none"></div><div style="left:89.16px;top:143.5px;width:4.4px;height:3px;border:1px solid #007c7c;border-top:none"></div><div style="left:105.12px;top:143.5px;width:4.4px;height:3px;border:1px solid #007c7c;border-top:none"></div><div style="left:110.44px;top:143.5px;width:4.4px;height:3px;border:1px solid #007c7c;border-top:none"></div><div style="left:115.76px;top:143.5px;width:4.4px;height:3px;border:1px solid #007c7c;border-top:none"></div><div style="left:137.04px;top:143.5px;width:4.4px;height:3px;border:1px solid #007c7c;border-top:none"></div><div style="left:142.36px;top:143.5px;width:4.4px;height:3px;border:1px solid #007c7c;border-top:none"></div><div style="left:147.68px;top:143.5px;width:4.4px;height:3px;border:1px solid #007c7c;border-top:none"></div><div class="t" style="left:46.00px;top:138.5px;color:#d8d8d8;font:9px/12px 'Liberation Mono',monospace;letter-spacing:-0.08px">  12,    9,   13,   </div>
<div class="t" style="left:46px;top:150.5px;color:#00a0a0;font:9px/12px 'Liberation Mono',monospace;letter-spacing:-0.08px">[EOF]</div>
<div class="t" style="left:31px;top:150.5px;color:#c8c800;font:10px/12px 'Liberation Mono',monospace;width:10px;text-align:right">7</div>
<div style="left:149px;top:92px;width:354px;height:87px;background:#d4d0c8;box-shadow: inset -1px -1px #404040, inset 1px 1px #d4d0c8, inset -2px -2px #808080, inset 2px 2px #ffffff;"></div>
<div style="left:151px;top:94px;width:351px;height:9px;background:linear-gradient(90deg,#808080,#c0c0c0)"></div>
<div style="left:152px;top:94px;width:9px;height:9px;background:#dcdcf0"></div>
<div style="left:153px;top:95px;width:2px;height:7px;background:#303090"></div>
<div style="left:156px;top:95px;width:2px;height:7px;background:#303090"></div>
<div style="left:159px;top:96px;width:1px;height:6px;background:#e0c020"></div>
<div style="left:163px;top:92px;width:85px;height:20px;overflow:hidden"><div id="f24" class="t" style="left:0;top:2px;color:#e4e0d8;font-weight:bold;font-size:10px;line-height:9px;transform:scaleX(0.6895);transform-origin:0 0">Master Zapper Controller</div></div>
<div style="left:472px;top:95px;width:9px;height:7px;background:#d4d0c8;box-shadow: inset -1px -1px #404040, inset 1px 1px #ffffff, inset -2px -2px #808080;"></div>
<svg style="position:absolute;left:472px;top:95px" width="9" height="7" viewBox="0 0 9 7"><rect x="2.5" y="4.5" width="3.5" height="1.3" fill="#000"/></svg>
<div style="left:481px;top:95px;width:9px;height:7px;background:#d4d0c8;box-shadow: inset -1px -1px #404040, inset 1px 1px #ffffff, inset -2px -2px #808080;"></div>
<svg style="position:absolute;left:481px;top:95px" width="9" height="7" viewBox="0 0 9 7"><rect x="2.0" y="1.5" width="5" height="4" fill="none" stroke="#000" stroke-width="0.9"/><rect x="2.0" y="1" width="5" height="1.2" fill="#000"/></svg>
<div style="left:492px;top:95px;width:9px;height:7px;background:#d4d0c8;box-shadow: inset -1px -1px #404040, inset 1px 1px #ffffff, inset -2px -2px #808080;"></div>
<svg style="position:absolute;left:492px;top:95px" width="9" height="7" viewBox="0 0 9 7"><path d="M2.3 1.6L6.7 5.2M6.7 1.6L2.3 5.2" stroke="#000" stroke-width="1.1"/></svg>
<div style="left:153px;top:101px;width:32px;height:20px;overflow:hidden"><div id="f25" class="t" style="left:0;top:2px;color:#808080;font-size:9px;line-height:10px;transform:scaleX(0.6105);transform-origin:0 0">ファイル(F)</div></div>
<div style="left:190px;top:101px;width:25px;height:20px;overflow:hidden"><div id="f26" class="t" style="left:0;top:2px;color:#808080;font-size:9px;line-height:10px;transform:scaleX(0.7333);transform-origin:0 0">表示(V)</div></div>
<div style="left:220px;top:101px;width:31px;height:20px;overflow:hidden"><div id="f27" class="t" style="left:0;top:2px;color:#808080;font-size:9px;line-height:10px;transform:scaleX(0.7089);transform-origin:0 0">送受信(C)</div></div>
<div style="left:255px;top:101px;width:30px;height:20px;overflow:hidden"><div id="f28" class="t" style="left:0;top:2px;color:#808080;font-size:9px;line-height:10px;transform:scaleX(0.6835);transform-origin:0 0">ヘルプ(H)</div></div>
<div style="left:151px;top:113px;width:351px;height:57px;background:#fff;border-top:1px solid #808080;border-left:1px solid #808080"></div>
<div style="left:152.0px;top:122.5px;width:24.0px;height:33px;background:#ff0000"></div><div style="left:226.0px;top:122.5px;width:4.0px;height:33px;background:#ff0000"></div><div style="left:232.5px;top:122.5px;width:3.5px;height:33px;background:#ff0000"></div><div style="left:245.0px;top:122.5px;width:3.0px;height:33px;background:#ff0000"></div><div style="left:257.0px;top:122.5px;width:4.0px;height:33px;background:#ff0000"></div><div style="left:264.0px;top:122.5px;width:3.0px;height:33px;background:#ff0000"></div><div style="left:270.0px;top:122.5px;width:4.0px;height:33px;background:#ff0000"></div><div style="left:276.0px;top:122.5px;width:4.0px;height:33px;background:#ff0000"></div><div style="left:282.5px;top:122.5px;width:3.5px;height:33px;background:#ff0000"></div><div style="left:295.0px;top:122.5px;width:4.0px;height:33px;background:#ff0000"></div><div style="left:301.0px;top:122.5px;width:4.0px;height:33px;background:#ff0000"></div><div style="left:307.5px;top:122.5px;width:3.5px;height:33px;background:#ff0000"></div><div style="left:321.0px;top:122.5px;width:3.5px;height:33px;background:#ff0000"></div><div style="left:326.0px;top:122.5px;width:4.0px;height:33px;background:#ff0000"></div><div style="left:332.5px;top:122.5px;width:3.5px;height:33px;background:#ff0000"></div><div style="left:339.0px;top:122.5px;width:3.5px;height:33px;background:#ff0000"></div><div style="left:345.5px;top:122.5px;width:3.5px;height:33px;background:#ff0000"></div><div style="left:353.5px;top:122.5px;width:3.5px;height:33px;background:#ff0000"></div><div style="left:358.6px;top:122.5px;width:3.0px;height:33px;background:#ff0000"></div><div style="left:365.5px;top:122.5px;width:3.0px;height:33px;background:#ff0000"></div><div style="left:377.5px;top:122.5px;width:3.0px;height:33px;background:#ff0000"></div><div style="left:389.5px;top:122.5px;width:4.0px;height:33px;background:#ff0000"></div><div style="left:402.5px;top:122.5px;width:3.5px;height:33px;background:#ff0000"></div><div style="left:414.5px;top:122.5px;width:3.5px;height:33px;background:#ff0000"></div><div style="left:428.0px;top:122.5px;width:3.5px;height:33px;background:#ff0000"></div><div style="left:434.6px;top:122.5px;width:3.0px;height:33px;background:#ff0000"></div><div style="left:446.6px;top:122.5px;width:3.0px;height:33px;background:#ff0000"></div><div style="left:453.5px;top:122.5px;width:3.5px;height:33px;background:#ff0000"></div><div style="left:459.5px;top:122.5px;width:3.5px;height:33px;background:#ff0000"></div><div style="left:466.0px;top:122.5px;width:3.0px;height:33px;background:#ff0000"></div><div style="left:478.0px;top:122.5px;width:3.7px;height:33px;background:#ff0000"></div><div style="left:488.6px;top:122.5px;width:3.0px;height:33px;background:#ff0000"></div>
<div style="left:152px;top:154px;width:340px;height:1.5px;background:#ff0000"></div>
<div style="left:492px;top:114px;width:9px;height:47px;background:#ece9e4"></div>
<div style="left:492px;top:114px;width:9px;height:8px;background:#d4d0c8;box-shadow: inset -1px -1px #404040, inset 1px 1px #ffffff, inset -2px -2px #808080;"></div>
<svg style="position:absolute;left:492px;top:114px" width="9" height="8" viewBox="0 0 9 8"><path d="M2.0 5.5L7.0 5.5L4.5 3.0Z" fill="#000"/></svg>
<div style="left:492px;top:122px;width:9px;height:31px;background:#d4d0c8;box-shadow: inset -1px -1px #404040, inset 1px 1px #ffffff, inset -2px -2px #808080;"></div>
<div style="left:492px;top:153px;width:9px;height:8px;background:#d4d0c8;box-shadow: inset -1px -1px #404040, inset 1px 1px #ffffff, inset -2px -2px #808080;"></div>
<svg style="position:absolute;left:492px;top:153px" width="9" height="8" viewBox="0 0 9 8"><path d="M2.0 3.0L7.0 3.0L4.5 5.5Z" fill="#000"/></svg>
<div style="left:152px;top:161px;width:340px;height:9px;background:#ece9e4"></div>
<div style="left:152px;top:161px;width:9px;height:9px;background:#d4d0c8;box-shadow: inset -1px -1px #404040, inset 1px 1px #ffffff, inset -2px -2px #808080;"></div>
<svg style="position:absolute;left:152px;top:161px" width="9" height="9" viewBox="0 0 9 9"><path d="M5.5 2.0L5.5 7.0L3.0 4.5Z" fill="#000"/></svg>
<div style="left:161px;top:161px;width:111px;height:9px;background:#d4d0c8;box-shadow: inset -1px -1px #404040, inset 1px 1px #ffffff, inset -2px -2px #808080;"></div>
<div style="left:484px;top:161px;width:8px;height:9px;background:#d4d0c8;box-shadow: inset -1px -1px #404040, inset 1px 1px #ffffff, inset -2px -2px #808080;"></div>
<svg style="position:absolute;left:484px;top:161px" width="8" height="9" viewBox="0 0 8 9"><path d="M3.0 2.0L3.0 7.0L5.5 4.5Z" fill="#000"/></svg>
<div style="left:492px;top:161px;width:9px;height:9px;background:#d4d0c8"></div>
<div style="left:151px;top:171px;width:234px;height:7px;border-top:1px solid #808080;border-left:1px solid #808080;border-right:1px solid #fff"></div>
<div style="left:152px;top:169px;width:233px;height:20px;overflow:hidden"><div id="f29" class="t" style="left:0;top:2px;color:#484848;font-size:7px;line-height:7px;transform:scaleX(0.8974);transform-origin:0 0">D:¥My Documents¥Cygwin_home¥furuta¥develop¥MasterZapper¥ruby¥0606key.s</div></div>
<div style="left:386px;top:171px;width:116px;height:7px;border-top:1px solid #808080;border-left:1px solid #808080"></div>
<div style="left:388px;top:169px;width:75px;height:20px;overflow:hidden"><div id="f30" class="t" style="left:0;top:2px;color:#484848;font-size:7px;line-height:7px;transform:scaleX(1.0217);transform-origin:0 0">00000000-b0901f4724</div></div>
<div style="left:30px;top:178px;width:571px;height:185px;background:#d4d0c8;box-shadow: inset -1px -1px #404040, inset 1px 1px #d4d0c8, inset -2px -2px #808080, inset 2px 2px #ffffff;"></div>
<div style="left:32px;top:180px;width:565px;height:10px;background:linear-gradient(90deg,#0a246a,#a6caf0)"></div>
<div style="left:33px;top:181px;width:9px;height:8px;background:#f0e020"></div>
<div style="left:34px;top:182px;width:7px;height:5px;background:#1828a0"></div>
<div style="left:44px;top:178px;width:49px;height:20px;overflow:hidden"><div id="f31" class="t" style="left:0;top:2px;color:#fff;font-weight:bold;font-size:9px;line-height:10px;transform:scaleX(0.7828);transform-origin:0 0">~ - genmei VT</div></div>
<div style="left:568px;top:181px;width:9px;height:7px;background:#d4d0c8;box-shadow: inset -1px -1px #404040, inset 1px 1px #ffffff, inset -2px -2px #808080;"></div>
<svg style="position:absolute;left:568px;top:181px" width="9" height="7" viewBox="0 0 9 7"><rect x="2.5" y="4.5" width="3.5" height="1.3" fill="#000"/></svg>
<div style="left:577px;top:181px;width:9px;height:7px;background:#d4d0c8;box-shadow: inset -1px -1px #404040, inset 1px 1px #ffffff, inset -2px -2px #808080;"></div>
<svg style="position:absolute;left:577px;top:181px" width="9" height="7" viewBox="0 0 9 7"><rect x="2.0" y="1.5" width="5" height="4" fill="none" stroke="#909090" stroke-width="0.9"/><rect x="2.0" y="1" width="5" height="1.2" fill="#909090"/></svg>
<div style="left:587px;top:181px;width:9px;height:7px;background:#d4d0c8;box-shadow: inset -1px -1px #404040, inset 1px 1px #ffffff, inset -2px -2px #808080;"></div>
<svg style="position:absolute;left:587px;top:181px" width="9" height="7" viewBox="0 0 9 7"><path d="M2.3 1.6L6.7 5.2M6.7 1.6L2.3 5.2" stroke="#000" stroke-width="1.1"/></svg>
<div style="left:35px;top:188px;width:13px;height:20px;overflow:hidden"><div id="f32" class="t" style="left:0;top:2px;color:#000;font-size:8.5px;line-height:10px;transform:scaleX(0.7298);transform-origin:0 0">File</div></div>
<div style="left:35px;top:198px;width:4px;height:1px;background:#000"></div>
<div style="left:53px;top:188px;width:13px;height:20px;overflow:hidden"><div id="f33" class="t" style="left:0;top:2px;color:#000;font-size:8.5px;line-height:10px;transform:scaleX(0.6823);transform-origin:0 0">Edit</div></div>
<div style="left:53px;top:198px;width:4px;height:1px;background:#000"></div>
<div style="left:70px;top:188px;width:20px;height:20px;overflow:hidden"><div id="f34" class="t" style="left:0;top:2px;color:#000;font-size:8.5px;line-height:10px;transform:scaleX(0.7651);transform-origin:0 0">Setup</div></div>
<div style="left:70px;top:198px;width:4px;height:1px;background:#000"></div>
<div style="left:93px;top:188px;width:23px;height:20px;overflow:hidden"><div id="f35" class="t" style="left:0;top:2px;color:#000;font-size:8.5px;line-height:10px;transform:scaleX(0.7298);transform-origin:0 0">Control</div></div>
<div style="left:93px;top:198px;width:4px;height:1px;background:#000"></div>
<div style="left:121px;top:188px;width:25px;height:20px;overflow:hidden"><div id="f36" class="t" style="left:0;top:2px;color:#000;font-size:8.5px;line-height:10px;transform:scaleX(0.7276);transform-origin:0 0">Window</div></div>
<div style="left:121px;top:198px;width:4px;height:1px;background:#000"></div>
<div style="left:150px;top:188px;width:16px;height:20px;overflow:hidden"><div id="f37" class="t" style="left:0;top:2px;color:#000;font-size:8.5px;line-height:10px;transform:scaleX(0.7435);transform-origin:0 0">Help</div></div>
<div style="left:150px;top:198px;width:4px;height:1px;background:#000"></div>
<div style="left:33px;top:200px;width:555px;height:160px;background:#432200"></div>
<div style="left:588px;top:200px;width:9px;height:160px;background:#eeede8"></div>
<div style="left:588px;top:200px;width:9px;height:9px;background:#d4d0c8;box-shadow: inset -1px -1px #404040, inset 1px 1px #ffffff, inset -2px -2px #808080;"></div>
<svg style="position:absolute;left:588px;top:200px" width="9" height="9" viewBox="0 0 9 9"><path d="M2.0 6.0L7.0 6.0L4.5 3.5Z" fill="#000"/></svg>
<div style="left:588px;top:344px;width:9px;height:8px;background:#d4d0c8;box-shadow: inset -1px -1px #404040, inset 1px 1px #ffffff, inset -2px -2px #808080;"></div>
<div style="left:588px;top:352px;width:9px;height:8px;background:#d4d0c8;box-shadow: inset -1px -1px #404040, inset 1px 1px #ffffff, inset -2px -2px #808080;"></div>
<svg style="position:absolute;left:588px;top:352px" width="9" height="8" viewBox="0 0 9 8"><path d="M2.0 3.0L7.0 3.0L4.5 5.5Z" fill="#000"/></svg>
<div style="left:34.5px;top:200px;width:22px;height:20px;overflow:hidden"><div id="f38" class="t" style="left:0;top:2px;color:#e6aa6a;font-size:9px;line-height:9px;font-weight:bold;transform:scaleX(1.0556);transform-origin:0 0">合計</div></div>
<div class="t" style="left:55.08px;top:201.5px;color:#e6aa6a;font:normal 9.5px/9px 'Liberation Mono',monospace;letter-spacing:-0.43px"> 52</div>
<div class="t" style="left:34.0px;top:210.95px;color:#e6aa6a;font:normal 9.5px/9px 'Liberation Mono',monospace;letter-spacing:-0.43px">-rwxr-xr-x    1 furuta   furuta        296  1</div>
<div style="left:272.15px;top:209.45px;width:11.5px;height:20px;overflow:hidden"><div id="f39" class="t" style="left:0;top:2px;color:#e6aa6a;font-size:9px;line-height:9px;font-weight:bold;transform:scaleX(0.9444);transform-origin:0 0">月</div></div>
<div class="t" style="left:286.96px;top:210.95px;color:#e6aa6a;font:normal 9.5px/9px 'Liberation Mono',monospace;letter-spacing:-0.43px">30 01:34 chgcnf</div>
<div class="t" style="left:34.0px;top:220.4px;color:#e6aa6a;font:normal 9.5px/9px 'Liberation Mono',monospace;letter-spacing:-0.43px">-rw-r--r--    1 furuta   furuta       4862  6</div>
<div style="left:272.15px;top:218.9px;width:11.5px;height:20px;overflow:hidden"><div id="f40" class="t" style="left:0;top:2px;color:#e6aa6a;font-size:9px;line-height:9px;font-weight:bold;transform:scaleX(0.9444);transform-origin:0 0">月</div></div>
<div class="t" style="left:286.96px;top:220.4px;color:#e6aa6a;font:normal 9.5px/9px 'Liberation Mono',monospace;letter-spacing:-0.43px"> 1 23:25 SvxIrKey.s</div>
<div class="t" style="left:34.0px;top:229.85px;color:#e6aa6a;font:normal 9.5px/9px 'Liberation Mono',monospace;letter-spacing:-0.43px">-rwxr-xr-x    1 furuta   furuta         61  6</div>
<div style="left:272.15px;top:228.35px;width:11.5px;height:20px;overflow:hidden"><div id="f41" class="t" style="left:0;top:2px;color:#e6aa6a;font-size:9px;line-height:9px;font-weight:bold;transform:scaleX(0.9444);transform-origin:0 0">月</div></div>
<div class="t" style="left:286.96px;top:229.85px;color:#e6aa6a;font:normal 9.5px/9px 'Liberation Mono',monospace;letter-spacing:-0.43px"> 2 01:14 make.sh</div>
<div class="t" style="left:34.0px;top:239.3px;color:#e6aa6a;font:normal 9.5px/9px 'Liberation Mono',monospace;letter-spacing:-0.43px">-rw-r--r--    1 furuta   furuta      21073  6</div>
<div style="left:272.15px;top:237.8px;width:11.5px;height:20px;overflow:hidden"><div id="f42" class="t" style="left:0;top:2px;color:#e6aa6a;font-size:9px;line-height:9px;font-weight:bold;transform:scaleX(0.9444);transform-origin:0 0">月</div></div>
<div class="t" style="left:286.96px;top:239.3px;color:#e6aa6a;font:normal 9.5px/9px 'Liberation Mono',monospace;letter-spacing:-0.43px"> 2 01:14 SvxIrKey.lst</div>
<div class="t" style="left:34.0px;top:248.75px;color:#e6aa6a;font:normal 9.5px/9px 'Liberation Mono',monospace;letter-spacing:-0.43px">-rw-r--r--    1 furuta   furuta        984  6</div>
<div style="left:272.15px;top:247.25px;width:11.5px;height:20px;overflow:hidden"><div id="f43" class="t" style="left:0;top:2px;color:#e6aa6a;font-size:9px;line-height:9px;font-weight:bold;transform:scaleX(0.9444);transform-origin:0 0">月</div></div>
<div class="t" style="left:286.96px;top:248.75px;color:#e6aa6a;font:normal 9.5px/9px 'Liberation Mono',monospace;letter-spacing:-0.43px"> 2 01:18 SvxIrKey.hex</div>
<div class="t" style="left:34.0px;top:258.2px;color:#e6aa6a;font:normal 9.5px/9px 'Liberation Mono',monospace;letter-spacing:-0.43px">-rw-r--r--    1 furuta   furuta       7900  6</div>
<div style="left:272.15px;top:256.7px;width:11.5px;height:20px;overflow:hidden"><div id="f44" class="t" style="left:0;top:2px;color:#e6aa6a;font-size:9px;line-height:9px;font-weight:bold;transform:scaleX(0.9444);transform-origin:0 0">月</div></div>
<div class="t" style="left:286.96px;top:258.2px;color:#e6aa6a;font:normal 9.5px/9px 'Liberation Mono',monospace;letter-spacing:-0.43px"> 7 00:38 SvxIrKey.asm</div>
<div class="t" style="left:34.0px;top:277.1px;color:#f8cc94;font:bold 9.5px/9px 'Liberation Mono',monospace;letter-spacing:-0.43px">&lt;furuta&gt; Mon Jun  7 - 00:38:14</div>
<div class="t" style="left:34.0px;top:286.55px;color:#f8cc94;font:bold 9.5px/9px 'Liberation Mono',monospace;letter-spacing:-0.43px">genmei:/home/furuta/develop/SvxIrKey[512] $</div>
<div class="t" style="left:265.88px;top:286.55px;color:#e6aa6a;font:normal 9.5px/9px 'Liberation Mono',monospace;letter-spacing:-0.43px">pic80ppc SvxIrKey.s</div>
<div class="t" style="left:34.0px;top:305.45px;color:#f8cc94;font:bold 9.5px/9px 'Liberation Mono',monospace;letter-spacing:-0.43px">&lt;furuta&gt; Mon Jun  7 - 00:38:16</div>
<div class="t" style="left:34.0px;top:314.9px;color:#f8cc94;font:bold 9.5px/9px 'Liberation Mono',monospace;letter-spacing:-0.43px">genmei:/home/furuta/develop/SvxIrKey[513] $</div>
<div class="t" style="left:265.88px;top:314.9px;color:#e6aa6a;font:normal 9.5px/9px 'Liberation Mono',monospace;letter-spacing:-0.43px">pa SvxIrKey.asm</div>
<div class="t" style="left:34.0px;top:324.35px;color:#e6aa6a;font:normal 9.5px/9px 'Liberation Mono',monospace;letter-spacing:-0.43px">SvxIrKey.asm:</div>
<div class="t" style="left:34.0px;top:343.25px;color:#f8cc94;font:bold 9.5px/9px 'Liberation Mono',monospace;letter-spacing:-0.43px">&lt;furuta&gt; Mon Jun  7 - 00:38:23</div>
<div class="t" style="left:34.0px;top:352.7px;color:#f8cc94;font:bold 9.5px/9px 'Liberation Mono',monospace;letter-spacing:-0.43px">genmei:/home/furuta/develop/SvxIrKey[514] $</div>
<div style="left:0px;top:385px;width:600px;height:15px;background:#d4d0c8;border-top:1px solid #fff"></div>
<div style="left:2px;top:388px;width:21px;height:11px;background:#d4d0c8;box-shadow: inset -1px -1px #404040, inset 1px 1px #ffffff, inset -2px -2px #808080;"></div>
<div style="left:4px;top:387px;width:20px;height:20px;overflow:hidden"><div id="f45" class="t" style="left:0;top:2px;color:#000;font-weight:bold;font-size:8px;line-height:9px;transform:scaleX(0.9323);transform-origin:0 0">Start</div></div>
<div style="left:25px;top:387px;width:2px;height:12px;border-left:1px solid #808080;border-right:1px solid #fff"></div>
<div style="left:30px;top:388px;width:33px;height:11px;background:#e6e4de;box-shadow: inset 1px 1px #404040, inset -1px -1px #fff, inset 2px 2px #808080"></div>
<div style="left:43px;top:387px;width:19px;height:20px;overflow:hidden"><div id="f46" class="t" style="left:0;top:2px;color:#000;font-size:8px;line-height:9px;transform:scaleX(0.8671);transform-origin:0 0">~ - ...</div></div>
<div style="left:33px;top:390px;width:9px;height:7px;background:#f0e020"></div>
<div style="left:34px;top:391px;width:7px;height:5px;background:#1828a0"></div>
<div style="left:66px;top:388px;width:32px;height:11px;background:#d4d0c8;box-shadow: inset -1px -1px #404040, inset 1px 1px #ffffff, inset -2px -2px #808080;"></div>
<div style="left:79px;top:387px;width:19px;height:20px;overflow:hidden"><div id="f47" class="t" style="left:0;top:2px;color:#000;font-size:8px;line-height:9px;transform:scaleX(0.7052);transform-origin:0 0">SVX...</div></div>
<div style="left:69px;top:390px;width:7px;height:8px;background:#d02020;border-radius:50%"></div>
<div style="left:71px;top:391.5px;width:3px;height:5px;background:#fff;border-radius:50%"></div>
<div style="left:100px;top:388px;width:33px;height:11px;background:#d4d0c8;box-shadow: inset -1px -1px #404040, inset 1px 1px #ffffff, inset -2px -2px #808080;"></div>
<div style="left:113px;top:387px;width:20px;height:20px;overflow:hidden"><div id="f48" class="t" style="left:0;top:2px;color:#000;font-size:8px;line-height:9px;transform:scaleX(0.8132);transform-origin:0 0">Ado...</div></div>
<div style="left:103px;top:390px;width:8px;height:8px;background:#28a028;border:1px solid #803030"></div>
<div style="left:136px;top:388px;width:32px;height:11px;background:#d4d0c8;box-shadow: inset -1px -1px #404040, inset 1px 1px #ffffff, inset -2px -2px #808080;"></div>
<div style="left:149px;top:387px;width:19px;height:20px;overflow:hidden"><div id="f49" class="t" style="left:0;top:2px;color:#000;font-size:8px;line-height:9px;transform:scaleX(0.7994);transform-origin:0 0">200...</div></div>
<div style="left:139px;top:391px;width:9px;height:6px;background:#eedc78;border:1px solid #a09040"></div>
<div style="left:171px;top:388px;width:33px;height:11px;background:#d4d0c8;box-shadow: inset -1px -1px #404040, inset 1px 1px #ffffff, inset -2px -2px #808080;"></div>
<div style="left:184px;top:387px;width:18px;height:20px;overflow:hidden"><div id="f50" class="t" style="left:0;top:2px;color:#000;font-size:8px;line-height:9px;transform:scaleX(0.9639);transform-origin:0 0">ruby</div></div>
<div style="left:174px;top:391px;width:9px;height:6px;background:#eedc78;border:1px solid #a09040"></div>
<div style="left:206px;top:388px;width:33px;height:11px;background:#d4d0c8;box-shadow: inset -1px -1px #404040, inset 1px 1px #ffffff, inset -2px -2px #808080;"></div>
<div style="left:219px;top:387px;width:20px;height:20px;overflow:hidden"><div id="f51" class="t" style="left:0;top:2px;color:#000;font-size:8px;line-height:9px;transform:scaleX(0.6708);transform-origin:0 0">wmzap</div></div>
<div style="left:209px;top:390px;width:8px;height:8px;background:#6060c0"></div>
<div style="left:241px;top:388px;width:33px;height:11px;background:#d4d0c8;box-shadow: inset -1px -1px #404040, inset 1px 1px #ffffff, inset -2px -2px #808080;"></div>
<div style="left:254px;top:387px;width:16px;height:20px;overflow:hidden"><div id="f52" class="t" style="left:0;top:2px;color:#000;font-size:8px;line-height:9px;transform:scaleX(0.9742);transform-origin:0 0">M...</div></div>
<div style="left:244px;top:390px;width:9px;height:8px;background:#70d828"></div>
<div style="left:283px;top:387px;width:2px;height:12px;border-left:1px solid #808080;border-right:1px solid #fff"></div>
<svg style="position:absolute;left:287px;top:388px" width="10" height="10" viewBox="0 0 10 10"><rect x="1" y="2" width="8" height="7" fill="#fff" stroke="#3060b0"/><rect x="1" y="2" width="8" height="2" fill="#3060b0"/><path d="M4 8L8 4" stroke="#e08020" stroke-width="1.5"/></svg>
<svg style="position:absolute;left:302px;top:388px" width="10" height="10" viewBox="0 0 10 10"><rect x="1" y="1" width="8" height="6" fill="#3878d0" stroke="#606060"/><rect x="3" y="7" width="5" height="2" fill="#909090"/></svg>
<svg style="position:absolute;left:316px;top:388px" width="10" height="10" viewBox="0 0 10 10"><ellipse cx="5" cy="6" rx="4.5" ry="2.5" fill="#b8b8b8" stroke="#707070" stroke-width="0.8"/></svg>
<svg style="position:absolute;left:328px;top:388px" width="10" height="10" viewBox="0 0 10 10"><ellipse cx="5" cy="6" rx="4.5" ry="2.5" fill="#b8b8b8" stroke="#707070" stroke-width="0.8"/></svg>
<svg style="position:absolute;left:341px;top:388px" width="10" height="10" viewBox="0 0 10 10"><path d="M0.5 3H4L5 4H9.5V9H0.5Z" fill="#ecd060" stroke="#907020" stroke-width="0.8"/><rect x="3" y="1" width="5" height="4" fill="#fff"/></svg>
<svg style="position:absolute;left:355px;top:388px" width="10" height="10" viewBox="0 0 10 10"><path d="M0.5 3H4L5 4H9.5V9H0.5Z" fill="#eedc70" stroke="#907020" stroke-width="0.8"/></svg>
<svg style="position:absolute;left:368px;top:388px" width="10" height="10" viewBox="0 0 10 10"><path d="M0.5 3H4L5 4H9.5V9H0.5Z" fill="#e8d068" stroke="#907020" stroke-width="0.8"/><circle cx="7" cy="4" r="2.5" fill="#40a040"/></svg>
<svg style="position:absolute;left:381px;top:388px" width="10" height="10" viewBox="0 0 10 10"><rect x="0.5" y="0.5" width="9" height="9" fill="#70d828"/><text x="1" y="8" font-size="7" font-weight="bold" fill="#204000" font-family="Liberation Sans">M</text></svg>
<svg style="position:absolute;left:395px;top:388px" width="10" height="10" viewBox="0 0 10 10"><circle cx="5" cy="5" r="4" fill="#4890e0"/><path d="M2 5A3 3 0 0 1 8 5" stroke="#fff" stroke-width="1.2" fill="none"/></svg>
<svg style="position:absolute;left:409px;top:388px" width="10" height="10" viewBox="0 0 10 10"><circle cx="5" cy="5" r="4" fill="#d82020"/><ellipse cx="5" cy="5" rx="1.5" ry="2.6" fill="#fff"/></svg>
<svg style="position:absolute;left:422px;top:388px" width="10" height="10" viewBox="0 0 10 10"><rect x="1" y="1" width="8" height="6" fill="#404040" stroke="#808080"/><rect x="2" y="2" width="6" height="3" fill="#c0c080"/><rect x="0" y="8" width="10" height="2" fill="#707070"/></svg>
<svg style="position:absolute;left:436px;top:388px" width="10" height="10" viewBox="0 0 10 10"><rect x="1" y="1" width="8" height="7" fill="#2848b0" stroke="#404040"/><rect x="3" y="3" width="4" height="3" fill="#e0d040"/></svg>
<div style="left:499px;top:387px;width:101px;height:13px;border-top:1px solid #808080;border-left:1px solid #808080"></div>
<svg style="position:absolute;left:500px;top:388px" width="11" height="10" viewBox="0 0 11 10"><rect x="1" y="5" width="8" height="4" fill="#909090"/><path d="M2 5L5 1H9" stroke="#30a030" stroke-width="2" fill="none"/></svg>
<svg style="position:absolute;left:511px;top:388px" width="8" height="10" viewBox="0 0 8 10"><path d="M1 3H3L7 0V10L3 7H1Z" fill="#e8e040" stroke="#808000" stroke-width="0.6"/></svg>
<svg style="position:absolute;left:521px;top:388px" width="11" height="10" viewBox="0 0 11 10"><ellipse cx="4" cy="6" rx="3" ry="2" fill="none" stroke="#505050" stroke-width="1.2" transform="rotate(-35 4 6)"/><ellipse cx="7" cy="4" rx="3" ry="2" fill="none" stroke="#505050" stroke-width="1.2" transform="rotate(-35 7 4)"/></svg>
<div style="left:532px;top:386px;width:12px;height:20px;overflow:hidden"><div id="f53" class="t" style="left:0;top:2px;color:#303030;font-size:9px;line-height:10px;transform:scaleX(1.0000);transform-origin:0 0">あ</div></div>
<svg style="position:absolute;left:543px;top:388px" width="10" height="10" viewBox="0 0 10 10"><rect x="0.5" y="0.5" width="9" height="9" fill="#e8d800" stroke="#2030a0"/><text x="2" y="8.5" font-size="8" font-weight="bold" fill="#d01080" font-family="Liberation Sans">K</text></svg>
<svg style="position:absolute;left:554px;top:388px" width="10" height="10" viewBox="0 0 10 10"><rect x="0.5" y="0.5" width="9" height="9" fill="#2040d0"/><rect x="2" y="3" width="6" height="4" fill="#fff"/><path d="M2 6L4 4L6 6L8 4" stroke="#d02020" fill="none"/></svg>
<div style="left:567px;top:386px;width:32px;height:20px;overflow:hidden"><div id="f54" class="t" style="left:0;top:2px;color:#000;font-size:6px;line-height:6px;transform:scaleX(1.1593);transform-origin:0 0">06/07(月)</div></div>
<div style="left:570px;top:391.5px;width:26px;height:20px;overflow:hidden"><div id="f55" class="t" style="left:0;top:2px;color:#000;font-size:6px;line-height:6px;transform:scaleX(0.9846);transform-origin:0 0">00:39:27</div></div>
</body></html>
